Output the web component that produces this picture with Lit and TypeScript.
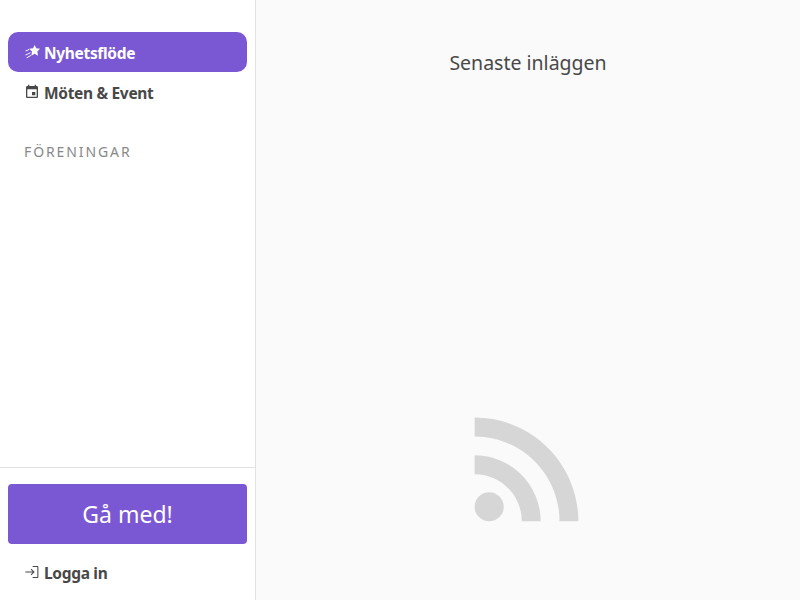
import { LitElement, html, css, svg } from 'lit';
import { customElement } from 'lit/decorators.js';

const starIcon = svg`<path d="M16 1.5l2.4 4.8 5.6.8-4 4.1 1 6.3-5-3-5 3 1-6.3-4-4.1 5.6-.8z"/><path d="M7.6 7.6L2 10.2l.5 1.2 5.8-2.7zM9.5 12.4L2 16l.5 1.2 7.4-3.6zM10.2 16.4L3.6 20.3l.7 1.1 6.3-3.8z"/>`;
const calendarIcon = svg`<path d="M17 12h-5v5h5v-5zM16 1v2H8V1H6v2H5c-1.11 0-1.99.9-1.99 2L3 19c0 1.1.89 2 2 2h14c1.1 0 2-.9 2-2V5c0-1.1-.9-2-2-2h-1V1h-2zm3 18H5V8h14v11z"/>`;
const loginIcon = svg`<path d="M11 7l-1.1 1.1 3.1 3.1H2v1.6h11l-3.1 3.1L11 17l5-5zM20 19.4h-7V21h7c.9 0 1.6-.7 1.6-1.6V4.6c0-.9-.7-1.6-1.6-1.6h-7v1.6h7z"/>`;

@customElement('app-root')
export class AppRoot extends LitElement {
  static styles = css`
    :host {
      display: flex;
      height: 600px;
      font-family: 'Noto Sans', 'Open Sans', sans-serif;
      color: #484848;
    }

    .sidebar {
      width: 255px;
      border-right: 1px solid #e2e2e2;
      background: #ffffff;
      display: flex;
      flex-direction: column;
    }

    .nav {
      flex: 1;
      padding: 32px 8px 0;
    }

    .item {
      height: 40px;
      padding: 0 16px;
      display: flex;
      align-items: center;
      gap: 4px;
      border-radius: 10px;
      font-size: 15.5px;
      letter-spacing: -0.32px;
      font-weight: 700;
    }

    .item span {
      padding-top: 2px;
    }

    .item svg {
      width: 16px;
      height: 16px;
      fill: currentColor;
      flex: none;
    }

    .item.active {
      background: #7b58d3;
      color: #ffffff;
    }

    .heading {
      margin: 20px 16px 0;
      height: 40px;
      line-height: 40px;
      font-size: 14px;
      letter-spacing: 1.9px;
      color: #888888;
    }

    .footer {
      border-top: 1px solid #e2e2e2;
      padding: 16px 8px 8px;
    }

    .join {
      height: 60px;
      border-radius: 4px;
      background: #7b58d3;
      color: #ffffff;
      font-size: 23px;
      display: flex;
      align-items: center;
      justify-content: center;
      margin-bottom: 8px;
    }

    .main {
      flex: 1;
      background: #fafafa;
      display: flex;
      flex-direction: column;
      align-items: center;
    }

    .title {
      margin-top: 49px;
      font-size: 19.5px;
      line-height: 28px;
    }

    .feed {
      margin-top: auto;
      margin-bottom: 52px;
      width: 160px;
      height: 160px;
      fill: #d6d6d6;
    }
  `;

  render() {
    return html`
      <aside class="sidebar">
        <nav class="nav">
          <div class="item active"><svg viewBox="0 0 24 24">${starIcon}</svg><span>Nyhetsflöde</span></div>
          <div class="item"><svg viewBox="0 0 24 24">${calendarIcon}</svg><span>Möten &amp; Event</span></div>
          <div class="heading">FÖRENINGAR</div>
        </nav>
        <div class="footer">
          <div class="join">Gå med!</div>
          <div class="item"><svg viewBox="0 0 24 24">${loginIcon}</svg><span>Logga in</span></div>
        </div>
      </aside>
      <main class="main">
        <div class="title">Senaste inläggen</div>
        <svg class="feed" viewBox="0 0 24 24">
          <circle cx="6.18" cy="17.82" r="2.18"></circle>
          <path d="M4 4.44v2.83c7.03 0 12.73 5.7 12.73 12.73h2.83c0-8.59-6.97-15.56-15.56-15.56zm0 5.66v2.83c3.9 0 7.07 3.17 7.07 7.07h2.83c0-5.47-4.43-9.9-9.9-9.9z"></path>
        </svg>
      </main>
    `;
  }
}
